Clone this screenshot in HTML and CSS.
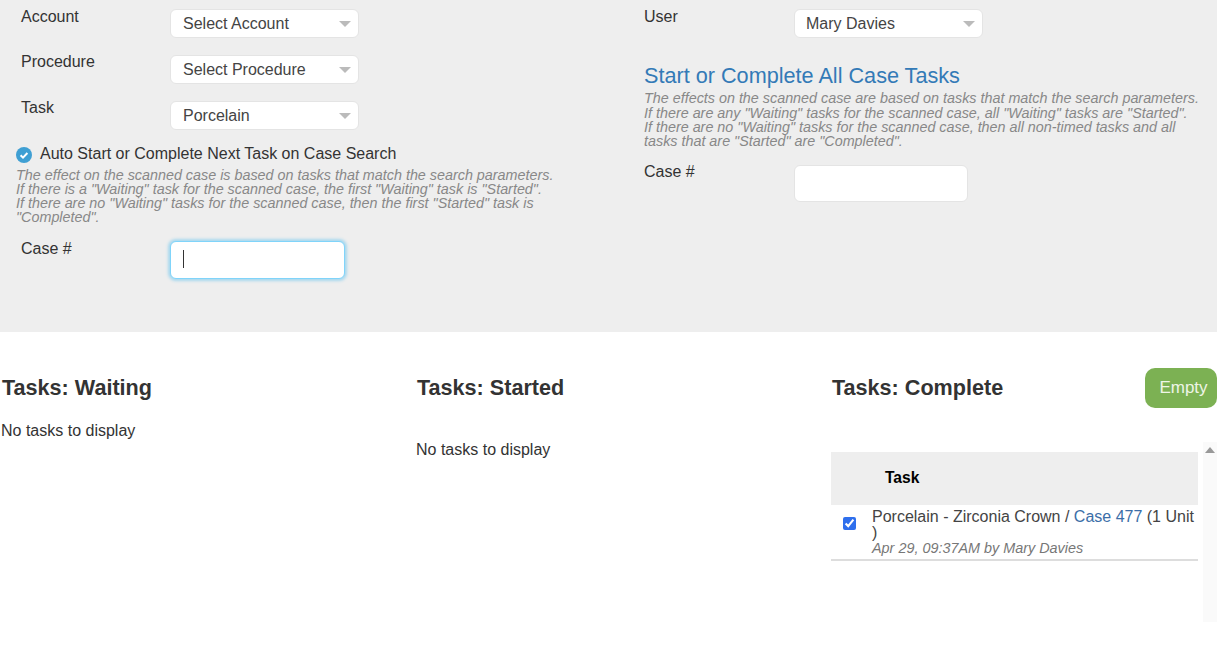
FILE: index.html
```html
<!DOCTYPE html>
<html lang="en">
<head>
<meta charset="utf-8">
<title>Tasks</title>
<link rel="stylesheet" href="styles.css">
</head>
<body>
<section class="panel">
  <div class="col col-left">
    <div class="row"><label class="lbl">Account</label><div class="select"><span>Select Account</span><i class="caret"></i></div></div>
    <div class="row"><label class="lbl">Procedure</label><div class="select"><span>Select Procedure</span><i class="caret"></i></div></div>
    <div class="row"><label class="lbl">Task</label><div class="select"><span>Porcelain</span><i class="caret"></i></div></div>
    <div class="auto">
      <svg class="check" width="16" height="16" viewBox="0 0 16 16"><circle cx="8" cy="8" r="8" fill="#3f9fd3"/><path d="M4.6 8.2l2.4 2.4 4.4-4.6" fill="none" stroke="#fff" stroke-width="2"/></svg>
      <span>Auto Start or Complete Next Task on Case Search</span>
    </div>
    <p class="help help-left">The effect on the scanned case is based on tasks that match the search parameters.<br>If there is a "Waiting" task for the scanned case, the first "Waiting" task is "Started".<br>If there are no "Waiting" tasks for the scanned case, then the first "Started" task is<br>"Completed".</p>
    <div class="row case-row"><label class="lbl">Case #</label><div class="input focused"><i class="cursor"></i></div></div>
  </div>
  <div class="col col-right">
    <div class="row"><label class="lbl">User</label><div class="select"><span>Mary Davies</span><i class="caret"></i></div></div>
    <h3 class="blue">Start or Complete All Case Tasks</h3>
    <p class="help">The effects on the scanned case are based on tasks that match the search parameters.<br>If there are any "Waiting" tasks for the scanned case, all "Waiting" tasks are "Started".<br>If there are no "Waiting" tasks for the scanned case, then all non-timed tasks and all<br>tasks that are "Started" are "Completed".</p>
    <div class="row case-row2"><label class="lbl">Case #</label><div class="input"></div></div>
  </div>
</section>
<section class="tasks">
  <div class="tcol tcol-wait">
    <h2>Tasks: Waiting</h2>
    <p class="none">No tasks to display</p>
  </div>
  <div class="tcol tcol-start">
    <h2>Tasks: Started</h2>
    <p class="none none-2">No tasks to display</p>
  </div>
  <div class="tcol tcol-done">
    <div class="done-head"><h2>Tasks: Complete</h2><button class="empty">Empty</button></div>
    <div class="list">
      <div class="table">
        <div class="thead">Task</div>
        <div class="trow">
          <input class="cb" type="checkbox" checked>
          <div class="tinfo">
            <div class="tname">Porcelain - Zirconia Crown / <a>Case 477</a> (1 Unit<br>)</div>
            <div class="tmeta">Apr 29, 09:37AM by Mary Davies</div>
          </div>
        </div>
      </div>
      <div class="scroll"><i class="up"></i></div>
    </div>
  </div>
</section>
</body>
</html>
```

FILE: styles.css
```css
* { box-sizing: border-box; }
html, body { margin: 0; padding: 0; background: #fff; overflow: hidden; }
body { width: 1220px; height: 654px; font-family: "Liberation Sans", Arial, sans-serif; font-size: 16px; color: #333; }
.panel { width: 1217px; height: 332px; background: #eee; display: flex; }
.col-left { width: 644px; padding: 9px 0 0 0; }
.col-right { flex: 1; padding-top: 9px; }
.row { display: flex; align-items: flex-start; height: 46px; }
.lbl { display: block; line-height: 18px; margin-top: -1px; }
.col-left .lbl { width: 149px; margin-left: 21px; }
.col-left .row + .row .lbl { margin-top: -2px; }
.col-right .lbl { width: 150px; }
.select { width: 189px; height: 29px; background: #fff; border: 1px solid #e4e4e4; border-radius: 6px; padding-left: 12px; line-height: 27px; display: flex; justify-content: space-between; align-items: center; color: #444; }
.col-right .select { padding-left: 11px; }
.caret { width: 0; height: 0; border-left: 6px solid transparent; border-right: 6px solid transparent; border-top: 6px solid #bbb; margin-right: 7px; }
.auto { display: flex; align-items: center; gap: 8px; margin-left: 16px; margin-top: -1px; height: 18px; }
.check { margin-top: -1px; }
.auto span { color: #333; line-height: 16px; margin-top: -2px; }
.help { margin: 0; font-size: 14.35px; line-height: 14.3px; font-style: italic; color: #888; }
.help-left { margin: 3.5px 0 0 16px; }
.case-row { margin-top: 16.5px; }
.input { height: 37px; width: 174px; background: #fff; border: 1px solid #e4e4e4; border-radius: 6px; }
.input.focused { width: 175px; height: 38px; border: 1px solid #80d4fa; box-shadow: 0 0 3px 2px #a8d8ee; position: relative; }
.cursor { position: absolute; left: 12px; top: 8px; width: 1px; height: 18px; background: #333; }
.blue { margin: 9px 0 0; font-size: 21.65px; font-weight: 400; line-height: 24px; color: #337ab7; }
.col-right .help { margin-top: 3.4px; }
.case-row2 { margin-top: 16.6px; }
.case-row2 .lbl { margin-top: -2px; }
.tasks { display: flex; width: 1217px; height: 322px; }
.tcol { width: 416px; }
.tcol-wait { width: 415px; }
.tcol h2 { margin: 0; font-size: 21.6px; line-height: 24px; font-weight: 700; color: #333; }
.tcol-wait h2, .tcol-start h2 { margin-top: 44px; padding-left: 2px; }
.none { margin: 21px 0 0 1px; line-height: 20px; }
.none-2 { margin-top: 40px; }
.tcol-done { flex: 1; padding-top: 36px; }
.done-head { display: flex; justify-content: space-between; align-items: center; height: 40px; }
.done-head h2 { padding-left: 1px; }
.empty { width: 72px; height: 40px; background: #7cb153; color: #eef5e6; border: 0; border-radius: 10px; font: 17px "Liberation Sans", Arial, sans-serif; padding: 0 0 0 5px; }
.list { display: flex; margin-top: 34px; height: 180px; }
.table { width: 367px; margin-top: 10px; }
.thead { height: 53px; background: #eee; color: #000; font-size: 15.6px; font-weight: 700; line-height: 52px; padding-left: 54px; }
.trow { display: flex; height: 56px; border-bottom: 2px solid #ddd; }
.cb { width: 13px; height: 13px; margin: 12px 16px 0 12px; accent-color: #2f6fed; }
.tinfo { padding-top: 4px; }
.tname { line-height: 16px; color: #444; }
.tname a { color: #3b6ea8; }
.tmeta { font-size: 14.4px; line-height: 15px; font-style: italic; color: #777; }
.scroll { width: 14px; margin-left: 5px; background: #fafafa; position: relative; }
.up { position: absolute; left: 2px; top: 5px; width: 0; height: 0; border-left: 5px solid transparent; border-right: 5px solid transparent; border-bottom: 6px solid #999; }
```
